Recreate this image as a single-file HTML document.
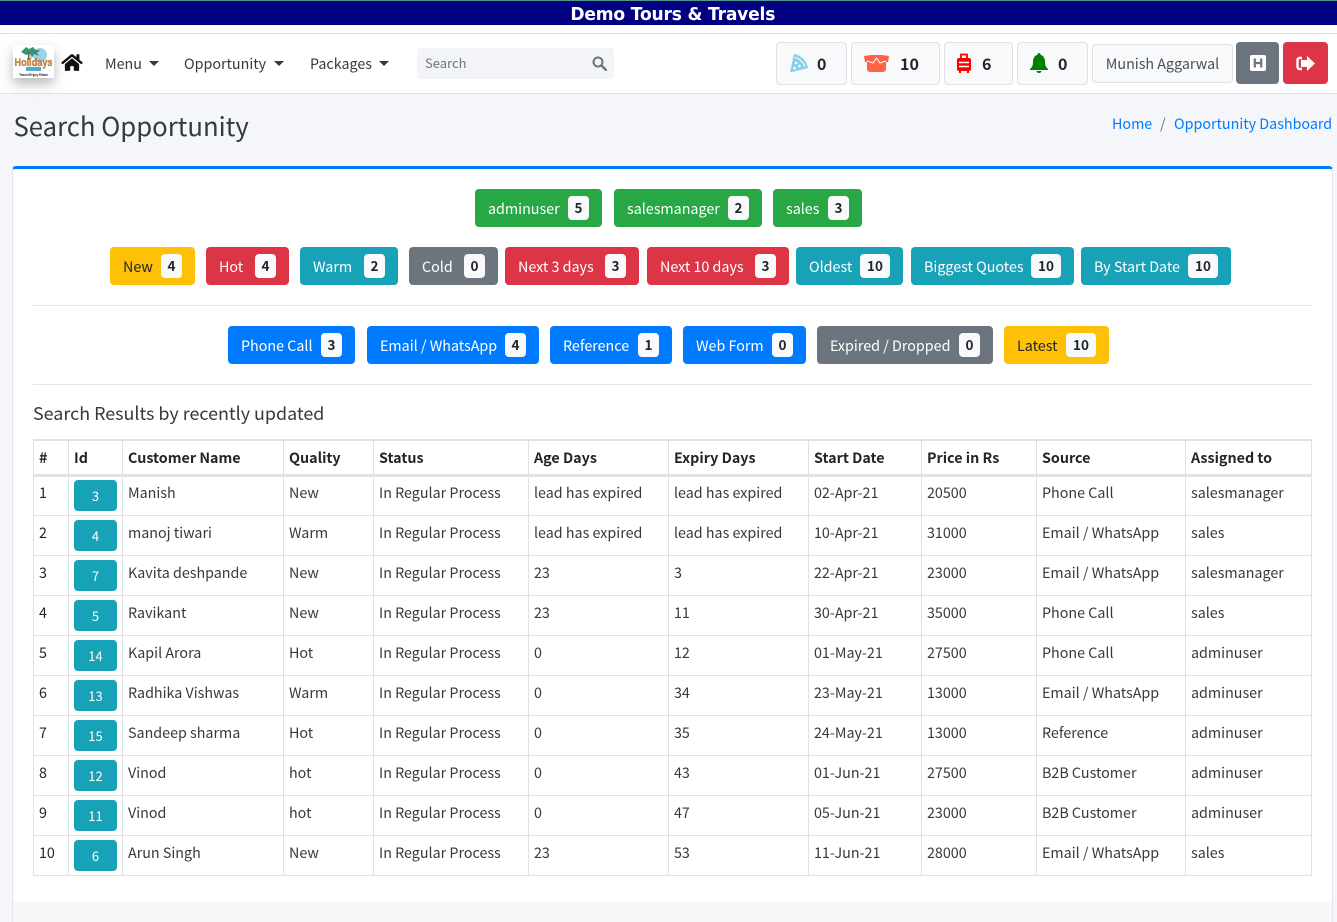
<!DOCTYPE html>
<html><head><meta charset="utf-8"><title>Search Opportunity</title>
<style>
*{box-sizing:border-box}
html,body{margin:0;padding:0}
html{height:922px;overflow:hidden}
body{width:1337px;height:922px;overflow:hidden;position:relative;background:#f4f6f9;font-family:"Noto Sans CJK JP","Liberation Sans",sans-serif;font-size:14.3px;color:#212529;line-height:20px}
.a{position:absolute;white-space:nowrap}
.b{position:absolute;height:38px;border-radius:4px;color:#fff;line-height:40px;padding-left:13px;white-space:nowrap}
.b i{position:absolute;right:13px;top:7px;width:21px;height:24px;background:#f8f9fa;border-radius:4px;color:#212529;font:700 13.5px/23px "Noto Sans CJK JP",sans-serif;text-align:center}
.g{background:#28a745}.y{background:#ffc107;color:#212529}.r{background:#dc3545}.t{background:#17a2b8}.s{background:#6c757d}.p{background:#007bff}
.n{position:absolute;top:42px;height:43px;background:#f8f9fa;border:1px solid #dee2e6;border-radius:4px;font-weight:700;font-size:16px;line-height:41px}
.n span{position:absolute;top:0}
.n svg{position:absolute}
table{position:absolute;left:33px;top:439px;width:1278px;border-collapse:collapse;table-layout:fixed}
th,td{border:1px solid #dee2e6;padding:0 5px;text-align:left;vertical-align:top;white-space:nowrap;overflow:hidden}
th{height:35px;font-weight:700;border-top-width:2px;border-bottom-width:3px;line-height:30px;padding-top:2px}
td{height:40px;line-height:34px;color:#343a40}
td:first-child{color:#212529}
tr:nth-child(2) td{line-height:32px}
td b{display:block;width:43px;height:31px;margin-top:4px;background:#17a2b8;border-radius:4px;color:#fff;font-weight:400;font-size:13px;line-height:32px;text-align:center}
tr:nth-child(2) td b{margin-top:3px}
</style></head><body>
<div class="a" style="left:0;top:0;width:1337px;height:1px;background:#4f9a8c"></div>
<div class="a" style="left:0;top:1px;width:1337px;height:24px;background:#000080;color:#fff;text-align:center;padding-left:8px;font:700 18px/27px 'Comic Sans MS','DejaVu Sans',sans-serif;letter-spacing:-.2px"><span style="display:inline-block;transform:scaleX(.95)">Demo Tours &amp; Travels</span></div>
<div class="a" style="left:0;top:25px;width:1337px;height:69px;background:#fff;border-bottom:1px solid #dee2e6"></div>
<div class="a" style="left:0;top:33px;width:1337px;height:1px;background:#dee2e6"></div>

<svg class="a" style="left:13px;top:45px;box-shadow:0 6px 12px rgba(0,0,0,.28)" width="41" height="33" viewBox="0 0 41 33">
<rect width="41" height="33" fill="#fff"/>
<circle cx="27" cy="10" r="7" fill="#9fd2e6"/>
<path d="M8 7 13 2 l3 2 4-2 3 3 4 0-3 3 2 3-5-2-2 4-2-4-4 1z" fill="#3a9478"/>
<rect x="15" y="7" width="1.500" height="8" fill="#4b6b4a"/>
<text x="20.500" y="21" text-anchor="middle" font-family="Liberation Sans,sans-serif" font-weight="700" font-size="11" textLength="38" lengthAdjust="spacingAndGlyphs" fill="#d8923f" stroke="#7a5426" stroke-width=".3">Holidays</text>
<rect x="13" y="22" width="15" height="4" fill="#57a9c9"/>
<text x="20.500" y="31" text-anchor="middle" font-family="Liberation Sans,sans-serif" font-size="4" font-weight="700" textLength="29" fill="#444">Travel Enjoy Relax</text>
</svg>
<svg class="a" style="left:61px;top:53px" width="22" height="19" viewBox="0 0 576 512"><path fill="#111" d="M280 148 96 300v164a16 16 0 0 0 16 16l112-.3a16 16 0 0 0 16-16V368a16 16 0 0 1 16-16h64a16 16 0 0 1 16 16v95.600a16 16 0 0 0 16 16l112 .4a16 16 0 0 0 16-16V300L296 148a12 12 0 0 0-16 0zM572 251l-84-69V44a12 12 0 0 0-12-12h-56a12 12 0 0 0-12 12v72l-89-74a48 48 0 0 0-61 0L4 251a12 12 0 0 0-2 17l26 31a12 12 0 0 0 17 2L280 107a12 12 0 0 1 16 0l235 194a12 12 0 0 0 17-2l26-31a12 12 0 0 0-2-17z"/></svg>

<div class="a" style="left:105px;top:54px;color:#343a40">Menu</div>
<div class="a" style="left:149px;top:61px;border:5px solid transparent;border-top-color:#343a40;border-bottom:0"></div>
<div class="a" style="left:184px;top:54px;color:#343a40">Opportunity</div>
<div class="a" style="left:274px;top:61px;border:5px solid transparent;border-top-color:#343a40;border-bottom:0"></div>
<div class="a" style="left:310px;top:54px;color:#343a40">Packages</div>
<div class="a" style="left:379px;top:61px;border:5px solid transparent;border-top-color:#343a40;border-bottom:0"></div>

<div class="a" style="left:417px;top:48px;width:197px;height:31px;background:#f2f4f7;border-radius:4px;color:#6c757d;font-size:13px;line-height:30px;padding-left:8px">Search</div>
<svg class="a" style="left:592px;top:56px" width="15" height="15" viewBox="0 0 15 15"><circle cx="6" cy="6" r="4.500" fill="none" stroke="#6c757d" stroke-width="2"/><path d="M9.500 9.500 14 14" stroke="#6c757d" stroke-width="2.400" stroke-linecap="round"/></svg>

<div class="n" style="left:776px;width:71px"><svg style="left:12px;top:10px" width="20" height="20" viewBox="0 0 20 20"><path d="M1 19.500 5 1A17 17 0 0 1 19 15Z" fill="#87ceeb"/><path d="M5.500 4.500A14 14 0 0 1 16 14" fill="none" stroke="#fff" stroke-width="1"/><circle cx="7" cy="10" r="1.300" fill="#fff"/><circle cx="10.500" cy="13" r="1.300" fill="#fff"/><circle cx="5.500" cy="15" r="1.300" fill="#fff"/></svg><span style="left:40px;color:#212529">0</span></div>
<div class="n" style="left:851px;width:89px"><svg style="left:12px;top:11px" width="25" height="18" viewBox="0 0 25 18"><path d="M0 2 7 1h11l7 1-1 6h-2v8l-2 2H5l-2-2V8H1z" fill="#ff6347"/><path d="M3 7l6 2 3.500-5L16 9l6-2" fill="none" stroke="#fff" stroke-width="1"/></svg><span style="left:48px">10</span></div>
<div class="n" style="left:944px;width:69px"><svg style="left:12px;top:10px" width="14" height="20" viewBox="0 0 14 20"><path d="M4 5V1.500h6V5" fill="none" stroke="#f00" stroke-width="1.800"/><rect x="0" y="5" width="14" height="13" rx="2" fill="#f00"/><rect x="2" y="18" width="2" height="2" fill="#f00"/><rect x="10" y="18" width="2" height="2" fill="#f00"/><path d="M2 9.500h10M2 13.500h10" stroke="#fff" stroke-width="1.500"/></svg><span style="left:37px">6</span></div>
<div class="n" style="left:1017px;width:71px"><svg style="left:12px;top:10px" width="18" height="20" viewBox="0 0 18 20"><path d="M9 0c1 0 1.500.7 1.500 1.700C13 2.500 15 5 15 8c0 5 1 6 3 8v1H0v-1c2-2 3-3 3-8 0-3 2-5.500 4.500-6.300C7.500.7 8 0 9 0z" fill="#008000"/><path d="M6.500 18h5a2.500 2 0 0 1-5 0z" fill="#008000"/></svg><span style="left:40px">0</span></div>
<div class="n" style="left:1092px;top:44px;height:39px;width:141px;font-weight:400;color:#495057;line-height:38px;text-align:center;font-size:14.3px">Munish Aggarwal</div>
<div class="a" style="left:1236px;top:42px;width:43px;height:42px;background:#6c757d;border-radius:4px"></div>
<svg class="a" style="left:1250px;top:55px" width="16" height="16" viewBox="0 0 16 16"><rect width="16" height="16" rx="2" fill="#fff"/><path d="M4.800 3.500v9M11.200 3.500v9M4.800 8h6.400" stroke="#6c757d" stroke-width="2.200"/></svg>
<div class="a" style="left:1283px;top:42px;width:45px;height:42px;background:#dc3545;border-radius:4px"></div>
<svg class="a" style="left:1296px;top:56px" width="19" height="15" viewBox="0 0 19 15"><path d="M6 2H3.500A2 2 0 0 0 1.500 4v7a2 2 0 0 0 2 2H6" fill="none" stroke="#fff" stroke-width="2.400"/><path d="M11 0l8 7.500-8 7.500v-4H5V4h6z" fill="#fff"/></svg>

<div class="a" style="left:13.500px;top:107px;font-size:25.700px;line-height:38px;color:#343a40">Search Opportunity</div>
<div class="a" style="left:1112px;top:114px;color:#007bff">Home</div>
<div class="a" style="left:1160px;top:114px;color:#6c757d">/</div>
<div class="a" style="left:1174px;top:114px;color:#007bff">Opportunity Dashboard</div>

<div class="a" style="left:12px;top:166px;width:1321px;height:756px;background:#fff;border-top:3px solid #007bff;border-left:1px solid #e3e5ea;border-right:1px solid #e3e5ea;border-radius:4px 4px 0 0"></div>
<div class="a" style="left:13px;top:902px;width:1319px;height:20px;background:#f7f7f7"></div>

<div class="b g" style="left:475px;top:189px;width:127px">adminuser<i>5</i></div>
<div class="b g" style="left:614px;top:189px;width:148px">salesmanager<i>2</i></div>
<div class="b g" style="left:773px;top:189px;width:89px">sales<i>3</i></div>

<div class="b y" style="left:110px;top:247px;width:85px">New<i>4</i></div>
<div class="b r" style="left:206px;top:247px;width:83px">Hot<i>4</i></div>
<div class="b t" style="left:300px;top:247px;width:98px">Warm<i>2</i></div>
<div class="b s" style="left:409px;top:247px;width:89px">Cold<i>0</i></div>
<div class="b r" style="left:505px;top:247px;width:134px">Next 3 days<i>3</i></div>
<div class="b r" style="left:647px;top:247px;width:142px">Next 10 days<i>3</i></div>
<div class="b t" style="left:796px;top:247px;width:107px">Oldest<i style="width:30px">10</i></div>
<div class="b t" style="left:911px;top:247px;width:163px">Biggest Quotes<i style="width:30px">10</i></div>
<div class="b t" style="left:1081px;top:247px;width:150px">By Start Date<i style="width:30px">10</i></div>

<div class="a" style="left:33px;top:305px;width:1279px;height:1px;background:#e5e7ea"></div>

<div class="b p" style="left:228px;top:326px;width:127px">Phone Call<i>3</i></div>
<div class="b p" style="left:367px;top:326px;width:172px">Email / WhatsApp<i>4</i></div>
<div class="b p" style="left:550px;top:326px;width:122px">Reference<i>1</i></div>
<div class="b p" style="left:683px;top:326px;width:123px">Web Form<i>0</i></div>
<div class="b s" style="left:817px;top:326px;width:176px">Expired / Dropped<i>0</i></div>
<div class="b y" style="left:1004px;top:326px;width:105px">Latest<i style="width:30px">10</i></div>

<div class="a" style="left:33px;top:384px;width:1279px;height:1px;background:#e5e7ea"></div>
<div class="a" style="left:33px;top:400px;font-size:17.900px;line-height:27px;color:#343a40">Search Results by recently updated</div>

<table>
<colgroup><col style="width:35px"><col style="width:54px"><col style="width:161px"><col style="width:90px"><col style="width:155px"><col style="width:140px"><col style="width:140px"><col style="width:113px"><col style="width:115px"><col style="width:149px"><col style="width:126px"></colgroup>
<tr><th>#</th><th>Id</th><th>Customer Name</th><th>Quality</th><th>Status</th><th>Age Days</th><th>Expiry Days</th><th>Start Date</th><th>Price in Rs</th><th>Source</th><th>Assigned to</th></tr>
<tr><td>1</td><td><b>3</b></td><td>Manish</td><td>New</td><td>In Regular Process</td><td>lead has expired</td><td>lead has expired</td><td>02-Apr-21</td><td>20500</td><td>Phone Call</td><td>salesmanager</td></tr>
<tr><td>2</td><td><b>4</b></td><td>manoj tiwari</td><td>Warm</td><td>In Regular Process</td><td>lead has expired</td><td>lead has expired</td><td>10-Apr-21</td><td>31000</td><td>Email / WhatsApp</td><td>sales</td></tr>
<tr><td>3</td><td><b>7</b></td><td>Kavita deshpande</td><td>New</td><td>In Regular Process</td><td>23</td><td>3</td><td>22-Apr-21</td><td>23000</td><td>Email / WhatsApp</td><td>salesmanager</td></tr>
<tr><td>4</td><td><b>5</b></td><td>Ravikant</td><td>New</td><td>In Regular Process</td><td>23</td><td>11</td><td>30-Apr-21</td><td>35000</td><td>Phone Call</td><td>sales</td></tr>
<tr><td>5</td><td><b>14</b></td><td>Kapil Arora</td><td>Hot</td><td>In Regular Process</td><td>0</td><td>12</td><td>01-May-21</td><td>27500</td><td>Phone Call</td><td>adminuser</td></tr>
<tr><td>6</td><td><b>13</b></td><td>Radhika Vishwas</td><td>Warm</td><td>In Regular Process</td><td>0</td><td>34</td><td>23-May-21</td><td>13000</td><td>Email / WhatsApp</td><td>adminuser</td></tr>
<tr><td>7</td><td><b>15</b></td><td>Sandeep sharma</td><td>Hot</td><td>In Regular Process</td><td>0</td><td>35</td><td>24-May-21</td><td>13000</td><td>Reference</td><td>adminuser</td></tr>
<tr><td>8</td><td><b>12</b></td><td>Vinod</td><td>hot</td><td>In Regular Process</td><td>0</td><td>43</td><td>01-Jun-21</td><td>27500</td><td>B2B Customer</td><td>adminuser</td></tr>
<tr><td>9</td><td><b>11</b></td><td>Vinod</td><td>hot</td><td>In Regular Process</td><td>0</td><td>47</td><td>05-Jun-21</td><td>23000</td><td>B2B Customer</td><td>adminuser</td></tr>
<tr><td>10</td><td><b>6</b></td><td>Arun Singh</td><td>New</td><td>In Regular Process</td><td>23</td><td>53</td><td>11-Jun-21</td><td>28000</td><td>Email / WhatsApp</td><td>sales</td></tr>
</table>
</body></html>
